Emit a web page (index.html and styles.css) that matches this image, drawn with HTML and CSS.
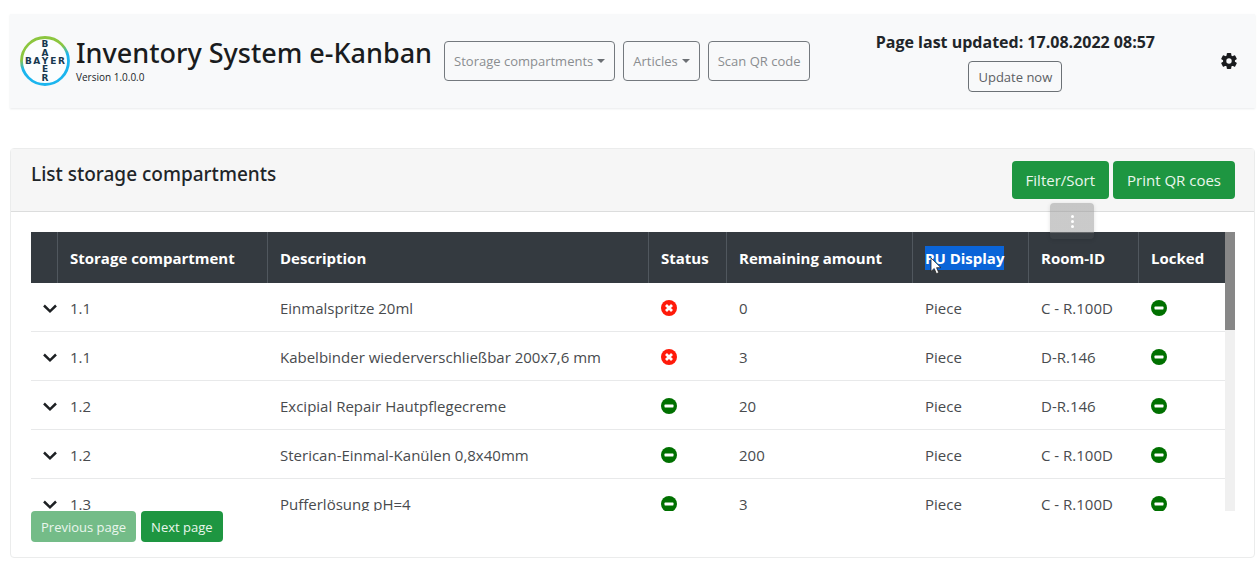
FILE: index.html
```html
<!DOCTYPE html>
<html lang="en">
<head>
<meta charset="utf-8">
<meta name="viewport" content="width=device-width, initial-scale=1">
<title>Inventory System e-Kanban</title>
<link rel="stylesheet" href="styles.css">
</head>
<body class="page">
<svg class="sprite" aria-hidden="true">
  <symbol id="chevron" viewBox="0 0 16 16"><path d="M2 5.500 8 11.300l6-5.800" fill="none" stroke="#1d2023" stroke-width="2.500"/></symbol>
  <symbol id="blocked" viewBox="0 0 16 16"><circle cx="8" cy="8" r="8" fill="#ff1a0a"/><path d="m5 5 6 6m0-6-6 6" stroke="#fff" stroke-width="2.800"/></symbol>
  <symbol id="minus" viewBox="0 0 16 16"><circle cx="8" cy="8" r="8" fill="#007000"/><rect x="3.500" y="6.600" width="9" height="2.800" rx=".6" fill="#fff"/></symbol>
</svg>

<header class="topbar">
  <div class="brand">
    <svg class="logo" viewBox="0 0 50 50" role="img" aria-label="Bayer">
      <defs>
        <linearGradient id="ring" x1="0" y1="0" x2=".35" y2="1">
          <stop offset=".42" stop-color="#8cc63f"/>
          <stop offset=".62" stop-color="#1bb5ee"/>
        </linearGradient>
      </defs>
      <circle cx="25" cy="25" r="23.500" fill="#fbfdfe" stroke="url(#ring)" stroke-width="2.800"/>
      <g class="logo-text">
        <text x="8.500" y="28">B</text><text x="16.700" y="28">A</text><text x="25" y="28">Y</text><text x="33.300" y="28">E</text><text x="41.500" y="28">R</text>
        <text x="25" y="11.200">B</text><text x="25" y="19.600">A</text><text x="25" y="36.400">E</text><text x="25" y="44.800">R</text>
      </g>
    </svg>
    <div class="brand-text">
      <h1 class="title">Inventory System e-Kanban</h1>
      <p class="version">Version 1.0.0.0</p>
    </div>
  </div>
  <nav class="nav">
    <button class="nav-button" type="button">Storage compartments<span class="caret"></span></button>
    <button class="nav-button" type="button">Articles<span class="caret"></span></button>
    <button class="nav-button" type="button">Scan QR code</button>
  </nav>
  <div class="updated">
    <strong class="updated-label">Page last updated: 17.08.2022 08:57</strong>
    <button class="update-button" type="button">Update now</button>
  </div>
  <button class="settings" type="button" aria-label="Settings">
    <svg class="gear" viewBox="0 0 16 16" aria-hidden="true">
      <g fill="#1a1c1e"><rect x="5.700" y="0" width="4.600" height="16" rx="1"/><rect x="5.700" y="0" width="4.600" height="16" rx="1" transform="rotate(60 8 8)"/><rect x="5.700" y="0" width="4.600" height="16" rx="1" transform="rotate(120 8 8)"/><circle cx="8" cy="8" r="6"/></g>
      <circle cx="8" cy="8" r="2.700" fill="#f8f9fa"/>
    </svg>
  </button>
</header>

<main class="card">
  <div class="card-header">
    <h2 class="card-title">List storage compartments</h2>
    <div class="card-actions">
      <button class="button" type="button">Filter/Sort</button>
      <button class="button" type="button">Print QR coes</button>
      <button class="handle" type="button" aria-label="More options"><span class="dot"></span><span class="dot"></span><span class="dot"></span></button>
    </div>
  </div>
  <div class="card-body">
    <div class="scroller">
      <div class="viewport">
        <table class="table">
          <colgroup><col class="c-toggle"><col class="c-storage"><col><col class="c-status"><col class="c-amount"><col class="c-unit"><col class="c-room"><col class="c-locked"></colgroup>
          <thead>
            <tr><th></th><th>Storage compartment</th><th>Description</th><th>Status</th><th>Remaining amount</th><th><span class="selected">PU Display<svg class="pointer" viewBox="0 0 12 18" aria-hidden="true"><path d="M1 1v13.500l3.200-3 2.200 5.200 2.400-1-2.200-5H11z" fill="#fff" stroke="#222" stroke-width=".8"/></svg></span></th><th>Room-ID</th><th>Locked</th></tr>
          </thead>
          <tbody>
            <tr><td class="toggle"><svg class="icon"><use href="#chevron"/></svg></td><td>1.1</td><td>Einmalspritze 20ml</td><td><svg class="icon"><use href="#blocked"/></svg></td><td>0</td><td>Piece</td><td>C - R.100D</td><td><svg class="icon"><use href="#minus"/></svg></td></tr>
            <tr><td class="toggle"><svg class="icon"><use href="#chevron"/></svg></td><td>1.1</td><td>Kabelbinder wiederverschließbar 200x7,6 mm</td><td><svg class="icon"><use href="#blocked"/></svg></td><td>3</td><td>Piece</td><td>D-R.146</td><td><svg class="icon"><use href="#minus"/></svg></td></tr>
            <tr><td class="toggle"><svg class="icon"><use href="#chevron"/></svg></td><td>1.2</td><td>Excipial Repair Hautpflegecreme</td><td><svg class="icon"><use href="#minus"/></svg></td><td>20</td><td>Piece</td><td>D-R.146</td><td><svg class="icon"><use href="#minus"/></svg></td></tr>
            <tr><td class="toggle"><svg class="icon"><use href="#chevron"/></svg></td><td>1.2</td><td>Sterican-Einmal-Kanülen 0,8x40mm</td><td><svg class="icon"><use href="#minus"/></svg></td><td>200</td><td>Piece</td><td>C - R.100D</td><td><svg class="icon"><use href="#minus"/></svg></td></tr>
            <tr><td class="toggle"><svg class="icon"><use href="#chevron"/></svg></td><td>1.3</td><td>Pufferlösung pH=4</td><td><svg class="icon"><use href="#minus"/></svg></td><td>3</td><td>Piece</td><td>C - R.100D</td><td><svg class="icon"><use href="#minus"/></svg></td></tr>
          </tbody>
        </table>
      </div>
      <div class="scrollbar"><div class="thumb"></div></div>
    </div>
    <div class="pager">
      <button class="button small" type="button" disabled>Previous page</button>
      <button class="button small" type="button">Next page</button>
    </div>
  </div>
</main>
</body>
</html>
```
FILE: styles.css
```css
* { box-sizing: border-box; }

.page {
  display: flex;
  flex-direction: column;
  gap: 40px;
  height: 100vh;
  min-height: 440px;
  margin: 0;
  padding: 14px 4px 11px 10px;
  background: #fff;
  color: #212529;
  font: 15px/24px "Open Sans", "Noto Sans", sans-serif;
}

.sprite { position: absolute; width: 0; height: 0; }

button { font: inherit; color: inherit; cursor: pointer; white-space: nowrap; }

.topbar {
  display: flex;
  align-items: center;
  flex: none;
  padding: 16px 18px 16px 10px;
  background: #f8f9fa;
  box-shadow: 0 1px 2px #e9ebec;
}

.brand { display: flex; align-items: center; gap: 6px; }
.logo { width: 50px; height: 50px; flex: none; }
.logo-text { font: 700 9px "DejaVu Sans", sans-serif; fill: #16384f; text-anchor: middle; }
.title { margin: 0; font: 500 27px/32px "Noto Sans", "Open Sans", sans-serif; color: #1a1c1e; white-space: nowrap; }
.version { margin: 0; font-size: 10px; line-height: 16px; }

.nav { display: flex; gap: 8px; margin-left: 12px; }
.nav-button {
  display: flex;
  align-items: center;
  gap: 4px;
  height: 40px;
  padding: 0 9px;
  border: 1px solid #74797e;
  border-radius: 4px;
  background: none;
  color: #8a8d90;
  font-size: 13px;
}
.caret { border: 4px solid transparent; border-top-color: #6c7074; border-bottom: 0; }

.updated { display: flex; flex-direction: column; align-items: center; gap: 7px; margin-left: auto; }
.updated-label { font-size: 16px; line-height: 24px; white-space: nowrap; }
.update-button {
  height: 31px;
  padding: 0 9px;
  border: 1px solid #6c7176;
  border-radius: 4px;
  background: none;
  color: #5c6064;
  font-size: 13px;
}
.settings { display: flex; margin-left: 66px; padding: 0; border: 0; background: none; }
.gear { width: 16px; height: 16px; }

.card {
  display: flex;
  flex-direction: column;
  flex: 1;
  min-height: 0;
  border: 1px solid #ebecec;
  border-radius: 4px;
}
.card-header {
  display: flex;
  justify-content: space-between;
  padding: 12px 19px 12px 20px;
  border-bottom: 1px solid #dcdddd;
  background: #f6f6f6;
}
.card-title { margin: 0; font: 500 19px/26px "Noto Sans", "Open Sans", sans-serif; }
.card-actions { position: relative; display: flex; gap: 4px; }

.button {
  height: 38px;
  padding: 0 14px;
  border: 0;
  border-radius: 4px;
  background: #1e9641;
  color: #eaf6ed;
  font-size: 15px;
}
.button.small { height: 31px; padding: 0 10px; font-size: 13px; }
.button:disabled { background: #74bc88; }

.handle {
  position: absolute;
  top: 42px;
  right: 141px;
  display: flex;
  flex-direction: column;
  align-items: center;
  justify-content: center;
  gap: 2px;
  width: 44px;
  height: 36px;
  padding: 0;
  border: 0;
  border-radius: 4px;
  background: linear-gradient(rgba(150, 150, 150, .5) 30px, rgba(100, 100, 100, .14) 30px);
  box-shadow: 0 1px 4px rgba(0, 0, 0, .12);
  z-index: 1;
}
.dot { width: 3px; height: 3px; border-radius: 50%; background: #fff; }

.card-body { display: flex; flex-direction: column; flex: 1; min-height: 0; padding: 20px 19px 15px 20px; }
.scroller { display: flex; flex: 1; min-height: 0; }
.viewport { flex: 1; overflow: hidden; }
.scrollbar { width: 10px; background: #f0f0f0; }
.thumb { height: 35%; background: #878787; }

.table { width: 100%; table-layout: fixed; border-collapse: separate; border-spacing: 0; color: #484b4e; }
.c-toggle { width: 27px; }
.c-storage { width: 210px; }
.c-status { width: 78px; }
.c-amount { width: 186px; }
.c-unit { width: 116px; }
.c-room { width: 110px; }
.c-locked { width: 86px; }
.table th {
  height: 51px;
  padding: 1px 0 0 12px;
  border-right: 1px solid #50575e;
  background: #343a40;
  color: #fff;
  text-align: left;
  white-space: nowrap;
}
.table th:last-child { border-right: 0; }
.table td { height: 49px; padding: 2px 0 0 12px; border-bottom: 1px solid #e8e9ea; white-space: nowrap; }
.table .toggle { padding-left: 11px; }
.icon { display: block; width: 16px; height: 16px; }
.selected { position: relative; display: inline-block; background: #0a64d8; }
.pointer { position: absolute; left: 5px; top: 11px; width: 12px; height: 18px; }

.pager { display: flex; gap: 5px; }
```
